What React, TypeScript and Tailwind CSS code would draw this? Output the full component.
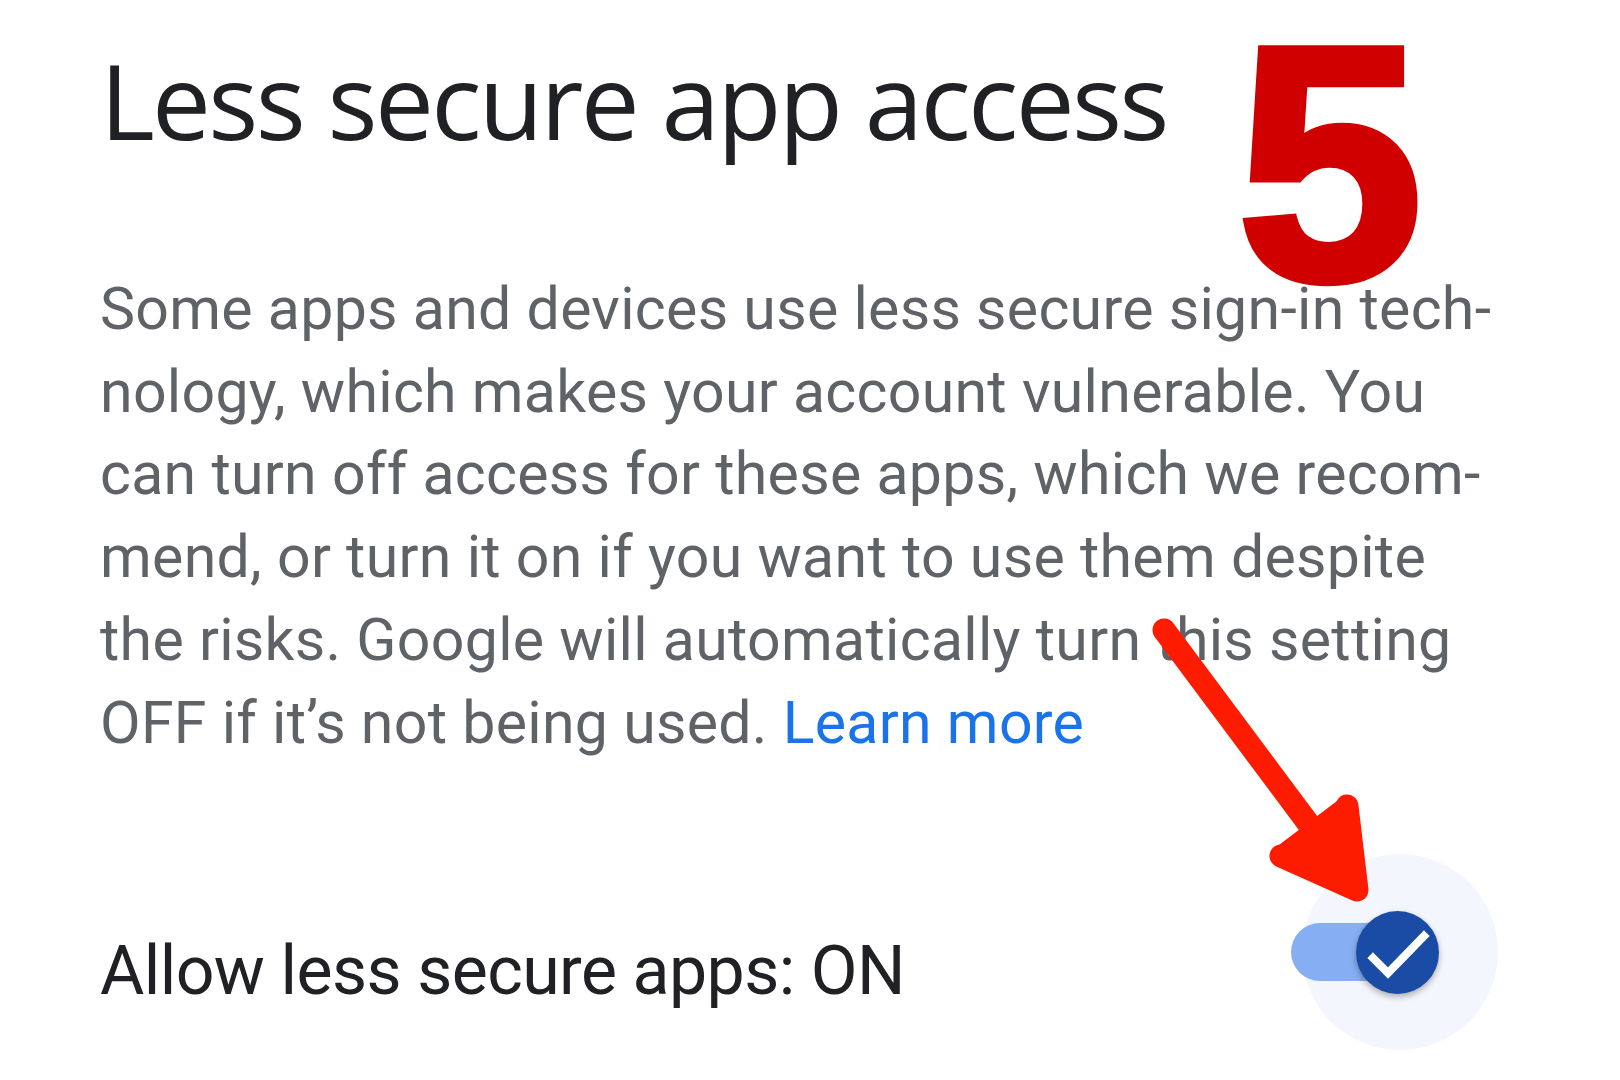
import React from "react";

const bodyLines: React.ReactNode[] = [
  "Some apps and devices use less secure sign-in tech-",
  "nology, which makes your account vulnerable. You",
  "can turn off access for these apps, which we recom-",
  "mend, or turn it on if you want to use them despite",
  "the risks. Google will automatically turn this setting",
  <>
    OFF if it’s not being used. <span className="text-[#1a73e8]">Learn more</span>
  </>,
];

function Toggle() {
  return (
    <div className="relative w-[196px] h-[196px] shrink-0 rounded-full bg-[#f3f6fc]">
      <div className="absolute left-[-11px] top-[69px] w-[124px] h-[58px] rounded-full bg-[#86aef2]" />
      <div className="absolute left-[54px] top-[57px] w-[83px] h-[83px] rounded-full bg-[#1a4ca6] shadow-[0_3px_6px_rgba(0,0,0,0.3)] flex items-center justify-center">
        <svg width="83" height="83" viewBox="0 0 83 83">
          <path d="M17 47 L32 62 L68 25" fill="none" stroke="white" strokeWidth="8" strokeLinecap="square" />
        </svg>
      </div>
    </div>
  );
}

export default function App() {
  return (
    <div className="relative w-[1620px] h-[1080px] bg-white overflow-hidden">
      <div className="flex flex-col pl-[100px] pr-[122px] pt-[47px]">
        <h1
          className="text-[105px] leading-[105px] text-[#202124] font-normal tracking-[-2.7px] whitespace-nowrap"
          style={{ fontFamily: '"Open Sans", sans-serif' }}
        >
          Less secure app access
        </h1>
        <div
          className="mt-[116px] flex flex-col text-[59px] leading-[82.7px] tracking-[0.3px] text-[#5f6368]"
          style={{ fontFamily: 'Roboto, sans-serif' }}
        >
          {bodyLines.map((l, i) => (
            <div key={i} className="whitespace-nowrap">
              {l}
            </div>
          ))}
        </div>
        <div className="mt-[90px] flex items-start justify-between">
          <div
            className="pt-[77px] text-[68px] leading-[80px] tracking-[-0.6px] text-[#202124] whitespace-nowrap"
            style={{ fontFamily: 'Roboto, sans-serif' }}
          >
            Allow less secure apps: ON
          </div>
          <Toggle />
        </div>
      </div>

      <div
        className="absolute left-[1237px] top-[29px] text-[334px] leading-[270px] font-bold text-[#d10000] [-webkit-text-stroke:8px_#d10000]"
        style={{ fontFamily: '"Liberation Sans", sans-serif' }}
      >
        5
      </div>

      <svg className="absolute left-0 top-0 pointer-events-none" width="1620" height="1080" viewBox="0 0 1620 1080">
        <g fill="none" stroke="#fe1c00" strokeWidth="23" strokeLinecap="round" strokeLinejoin="round">
          <path d="M1164 630 L1352 882" />
          <path d="M1281 856 L1357 890 L1347 806" />
        </g>
        <path d="M1281 856 L1357 890 L1347 806 Z" fill="#fe1c00" stroke="#fe1c00" strokeWidth="20" strokeLinejoin="round" />
      </svg>
    </div>
  );
}
